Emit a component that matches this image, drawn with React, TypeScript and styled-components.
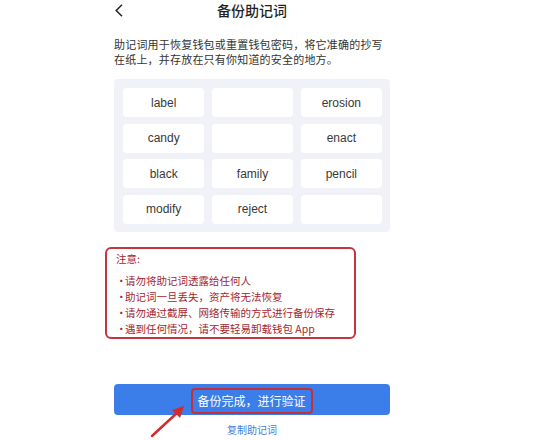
import React from 'react';
import styled, { createGlobalStyle } from 'styled-components';

const GlobalStyle = createGlobalStyle`
  body {
    margin: 0;
    background: #fff;
    font-family: 'Noto Sans CJK SC', 'Noto Sans', sans-serif;
    color: #222;
  }
`;

const Page = styled.div`
  position: relative;
  width: 555px;
  height: 440px;
  overflow: hidden;
  padding-left: 114px;
  box-sizing: border-box;
`;

const Column = styled.div`
  width: 276px;
  display: flex;
  flex-direction: column;
`;

const Header = styled.div`
  display: grid;
  grid-template-columns: 20px 1fr 20px;
  align-items: center;
  height: 20px;
`;

const Back = styled.div`
  display: flex;
  align-items: center;
  padding-left: 1px;
`;

const Title = styled.div`
  text-align: center;
  font-size: 14px;
  font-weight: 500;
  line-height: 20px;
  color: #1f1f1f;
`;

const Intro = styled.p`
  margin: 17px 0 0;
  font-size: 11px;
  letter-spacing: 0.2px;
  line-height: 15px;
  color: #333;
`;

const WordPanel = styled.div`
  margin-top: 12px;
  background: #f1f2f7;
  border-radius: 4px;
  padding: 9px 8px 8px 9px;
  display: grid;
  grid-template-columns: repeat(3, 1fr);
  column-gap: 7.5px;
  row-gap: 6.5px;
`;

const Word = styled.div`
  height: 29px;
  background: #fff;
  border-radius: 4px;
  display: flex;
  align-items: center;
  justify-content: center;
  font-family: 'Liberation Sans', Arial, sans-serif;
  font-size: 12px;
  color: #383838;
`;

const Notice = styled.div`
  margin: 15px 0 0 -9px;
  width: 251px;
  box-sizing: border-box;
  border: 2px solid #c8343e;
  border-radius: 6px;
  padding: 2px 8px 0 9px;
  color: #a3262f;
  font-size: 10.5px;
`;

const NoticeTitle = styled.div`
  line-height: 16px;
`;

const NoticeList = styled.ul`
  list-style: none;
  margin: 6px 0 0;
  padding: 0;
`;

const NoticeItem = styled.li`
  line-height: 16px;
  display: flex;
  &::before {
    content: '·';
    width: 9px;
    flex: none;
  }
`;

const PrimaryButton = styled.button`
  margin-top: 45px;
  height: 31px;
  border: none;
  border-radius: 4px;
  background: #3b7ee9;
  display: flex;
  align-items: flex-end;
  justify-content: center;
  padding: 0 0 1px;
  font-family: inherit;
`;

const Highlight = styled.span`
  display: inline-flex;
  align-items: center;
  height: 26px;
  box-sizing: border-box;
  padding: 0 5px 1px 4px;
  border: 2px solid #c4303a;
  border-radius: 4px;
  color: #fff;
  font-size: 12px;
`;

const CopyLink = styled.div`
  margin-top: 8px;
  text-align: center;
  font-size: 10px;
  line-height: 14px;
  color: #3d7de0;
`;

const Arrow = styled.svg`
  position: absolute;
  left: 146px;
  top: 400px;
`;

const words = ['label', '', 'erosion', 'candy', '', 'enact', 'black', 'family', 'pencil', 'modify', 'reject', ''];

const tips = [
  '请勿将助记词透露给任何人',
  '助记词一旦丢失，资产将无法恢复',
  '请勿通过截屏、网络传输的方式进行备份保存',
  '遇到任何情况，请不要轻易卸载钱包 App',
];

const App = () => {
  return (
    <Page>
      <GlobalStyle />
      <Column>
        <Header>
          <Back>
            <svg width="8" height="13" viewBox="0 0 8 13">
              <polyline points="7,0.8 1.2,6.5 7,12.2" fill="none" stroke="#222" strokeWidth="1.5" />
            </svg>
          </Back>
          <Title>备份助记词</Title>
          <span />
        </Header>
        <Intro>
          助记词用于恢复钱包或重置钱包密码，将它准确的抄写
          <br />
          在纸上，并存放在只有你知道的安全的地方。
        </Intro>
        <WordPanel>
          {words.map((w, i) => (
            <Word key={i}>{w}</Word>
          ))}
        </WordPanel>
        <Notice>
          <NoticeTitle>注意:</NoticeTitle>
          <NoticeList>
            {tips.map((t) => (
              <NoticeItem key={t}>{t}</NoticeItem>
            ))}
          </NoticeList>
        </Notice>
        <PrimaryButton>
          <Highlight>备份完成，进行验证</Highlight>
        </PrimaryButton>
        <CopyLink>复制助记词</CopyLink>
      </Column>
      <Arrow width="44" height="40" viewBox="0 0 44 40">
        <line x1="6" y1="36" x2="32" y2="12" stroke="#d42a2a" strokeWidth="2.4" strokeLinecap="round" />
        <polygon points="38,6 26,10 34,18" fill="#d42a2a" />
      </Arrow>
    </Page>
  );
};

export default App;
